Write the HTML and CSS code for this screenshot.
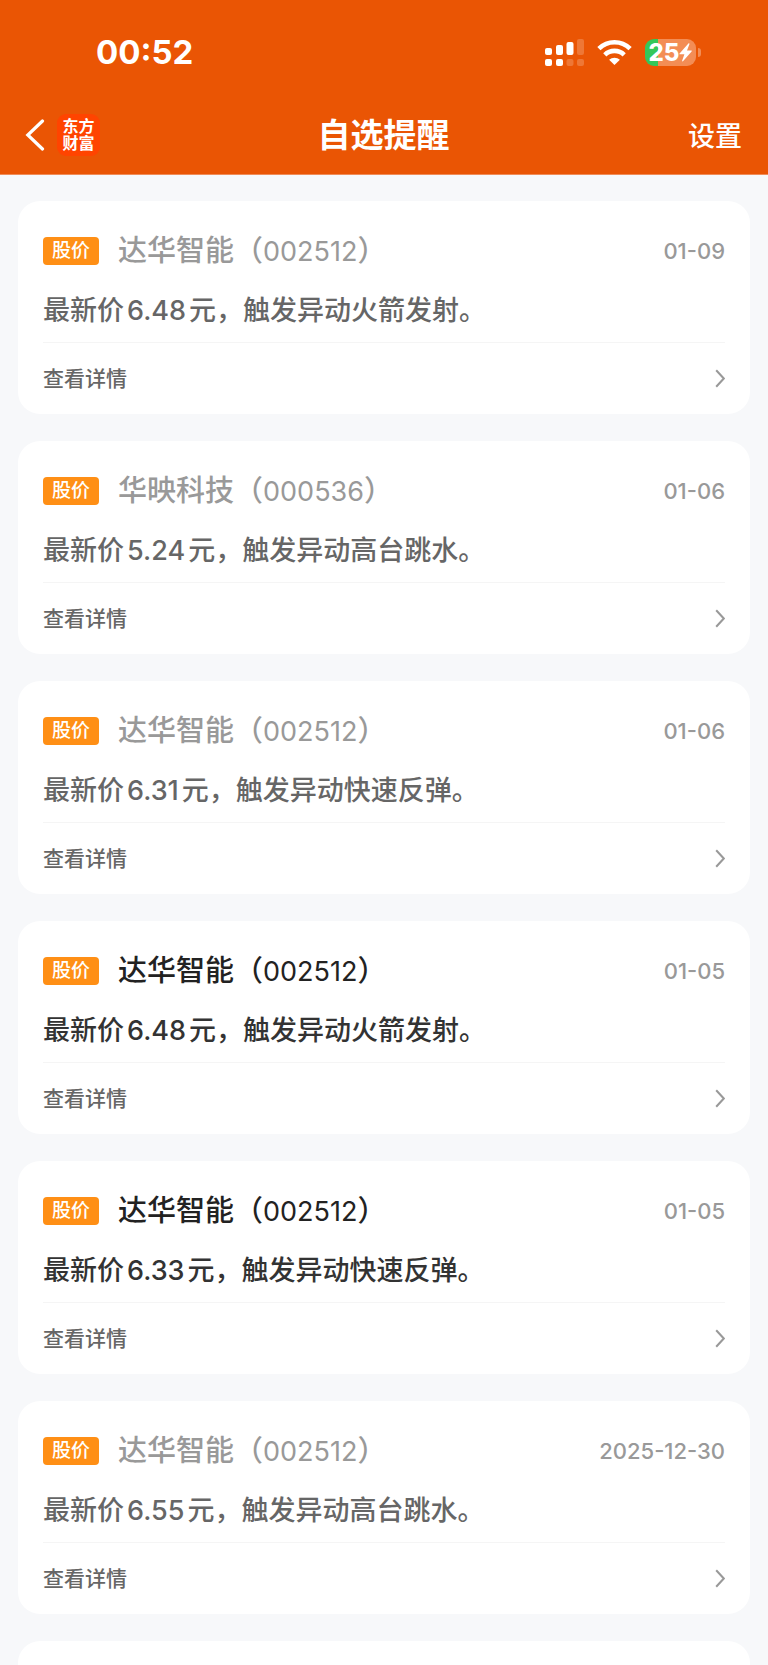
FILE: index.html
```
<!DOCTYPE html>
<html lang="zh-CN">
<head>
    <meta charset="UTF-8">
    <meta name="viewport" content="width=device-width, initial-scale=1.0">
    <title>自选提醒</title>
    <link rel="stylesheet" href="styles.css">
</head>
<body>
    <header class="header">
        <div class="status-bar">
            <span class="time">00:52</span>
            <div class="status-icons">
                <!-- Dual SIM signal -->
                <svg width="39" height="27" viewBox="0 0 39 27" fill="#fff">
                    <rect x="0" y="9" width="7" height="7" rx="2"/>
                    <rect x="11" y="6" width="7" height="10" rx="2"/>
                    <rect x="21.5" y="3" width="7" height="13" rx="2"/>
                    <rect x="32" y="0" width="7" height="16" rx="2" opacity="0.2"/>
                    <rect x="0" y="20" width="7" height="7" rx="2"/>
                    <rect x="11" y="20" width="7" height="7" rx="2"/>
                    <rect x="21.5" y="20" width="7" height="7" rx="2" opacity="0.2"/>
                    <rect x="32" y="20" width="7" height="7" rx="2" opacity="0.2"/>
                </svg>
                <!-- Wi-Fi -->
                <svg width="35" height="27" viewBox="0 0 35 27" fill="none" stroke="#fff" stroke-width="4.6">
                    <path d="M1.9 9.6C10.6 1.1 24.4 1.1 33.1 9.6"/>
                    <path d="M7.8 15.8C13.2 10.6 21.8 10.6 27.2 15.8"/>
                    <path d="M17.5 26L12.1 20.8C15.1 18 19.9 18 22.9 20.8Z" fill="#fff" stroke="none"/>
                </svg>
                <!-- Battery -->
                <div class="battery">
                    <span class="battery-level">25<svg width="13" height="19" viewBox="0 0 13 19" fill="#fff"><path d="M9.4 0.6L0.6 10.4C0.2 10.9 0.4 11.3 1 11.3H5.4L3.2 17.6C2.9 18.6 3.6 18.8 4.2 18.1L12.6 8.4C13 7.9 12.8 7.5 12.2 7.5H8L10.4 1.2C10.7 0.3 10 0 9.4 0.6Z"/></svg></span>
                    <span class="battery-tip"></span>
                </div>
            </div>
        </div>
        <nav class="nav">
            <div class="nav-left">
                <button class="back" type="button" aria-label="返回">
                    <svg width="20" height="32" viewBox="0 0 20 32" fill="none" stroke="#fff" stroke-width="3.2" stroke-linecap="round"><path d="M17.5 2L2.8 16L17.5 30"/></svg>
                </button>
                <span class="logo">东方<br>财富</span>
            </div>
            <h1 class="title">自选提醒</h1>
            <button class="settings" type="button">设置</button>
        </nav>
    </header>

    <main class="list">
        <article class="card read">
            <div class="card-head">
                <span class="tag">股价</span>
                <h2 class="name">达华智能（<span class="code">002512</span>）</h2>
                <time class="date">01-09</time>
            </div>
            <p class="message">最新价<span class="price">6.48</span>元，触发异动火箭发射。</p>
            <a class="detail" href="#">查看详情
                <svg class="arrow" width="10" height="19" viewBox="0 0 10 19"><path d="M1.2 1.2L8.8 9.5L1.2 17.8"/></svg>
            </a>
        </article>

        <article class="card read">
            <div class="card-head">
                <span class="tag">股价</span>
                <h2 class="name">华映科技（<span class="code">000536</span>）</h2>
                <time class="date">01-06</time>
            </div>
            <p class="message">最新价<span class="price">5.24</span>元，触发异动高台跳水。</p>
            <a class="detail" href="#">查看详情
                <svg class="arrow" width="10" height="19" viewBox="0 0 10 19"><path d="M1.2 1.2L8.8 9.5L1.2 17.8"/></svg>
            </a>
        </article>

        <article class="card read">
            <div class="card-head">
                <span class="tag">股价</span>
                <h2 class="name">达华智能（<span class="code">002512</span>）</h2>
                <time class="date">01-06</time>
            </div>
            <p class="message">最新价<span class="price">6.31</span>元，触发异动快速反弹。</p>
            <a class="detail" href="#">查看详情
                <svg class="arrow" width="10" height="19" viewBox="0 0 10 19"><path d="M1.2 1.2L8.8 9.5L1.2 17.8"/></svg>
            </a>
        </article>

        <article class="card">
            <div class="card-head">
                <span class="tag">股价</span>
                <h2 class="name">达华智能（<span class="code">002512</span>）</h2>
                <time class="date">01-05</time>
            </div>
            <p class="message">最新价<span class="price">6.48</span>元，触发异动火箭发射。</p>
            <a class="detail" href="#">查看详情
                <svg class="arrow" width="10" height="19" viewBox="0 0 10 19"><path d="M1.2 1.2L8.8 9.5L1.2 17.8"/></svg>
            </a>
        </article>

        <article class="card">
            <div class="card-head">
                <span class="tag">股价</span>
                <h2 class="name">达华智能（<span class="code">002512</span>）</h2>
                <time class="date">01-05</time>
            </div>
            <p class="message">最新价<span class="price">6.33</span>元，触发异动快速反弹。</p>
            <a class="detail" href="#">查看详情
                <svg class="arrow" width="10" height="19" viewBox="0 0 10 19"><path d="M1.2 1.2L8.8 9.5L1.2 17.8"/></svg>
            </a>
        </article>

        <article class="card read">
            <div class="card-head">
                <span class="tag">股价</span>
                <h2 class="name">达华智能（<span class="code">002512</span>）</h2>
                <time class="date">2025-12-30</time>
            </div>
            <p class="message">最新价<span class="price">6.55</span>元，触发异动高台跳水。</p>
            <a class="detail" href="#">查看详情
                <svg class="arrow" width="10" height="19" viewBox="0 0 10 19"><path d="M1.2 1.2L8.8 9.5L1.2 17.8"/></svg>
            </a>
        </article>

        <article class="card card-empty"></article>
    </main>
</body>
</html>
```
FILE: styles.css
```
* {
    box-sizing: border-box;
}
body {
    display: flex;
    flex-direction: column;
    height: 100vh;
    margin: 0;
    font-family: Inter, "Noto Sans CJK SC", sans-serif;
    background: #f7f8fa;
    color: #333;
}
h1, h2, p {
    margin: 0;
}
button {
    padding: 0;
    border: none;
    background: none;
    color: inherit;
    font-family: inherit;
    cursor: pointer;
}
svg {
    display: block;
}

/* Header */
.header {
    flex-shrink: 0;
    background: #ea5504;
    border-bottom: 1px solid #f08c58;
    color: #fff;
}
.status-bar {
    display: flex;
    align-items: center;
    justify-content: space-between;
    height: 104px;
    padding: 0 67px 0 96px;
}
.time {
    font-size: 33px;
    font-weight: 700;
}
.status-icons {
    display: flex;
    align-items: center;
    gap: 13px;
}
.battery {
    display: flex;
    align-items: center;
    gap: 2px;
}
.battery-level {
    display: flex;
    align-items: center;
    justify-content: center;
    width: 51px;
    height: 27px;
    border-radius: 9px;
    background: linear-gradient(to right, #34c759 25%, #f38d55 25%);
    font-size: 24px;
    font-weight: 800;
}
.battery-tip {
    width: 3px;
    height: 9px;
    border-radius: 0 4px 4px 0;
    background: #f38d55;
}
.nav {
    display: grid;
    grid-template-columns: 1fr auto 1fr;
    align-items: center;
    height: 70px;
    padding: 0 26px 8px 25px;
}
.nav-left {
    display: flex;
    align-items: center;
    gap: 12px;
}
.logo {
    width: 43px;
    height: 42px;
    padding-top: 4px;
    border-radius: 9px;
    background: #ff4400;
    font-size: 16px;
    font-weight: 700;
    line-height: 17px;
    text-align: center;
}
.title {
    font-size: 33px;
    font-weight: 700;
    line-height: 40px;
}
.settings {
    justify-self: end;
    padding-top: 3px;
    font-size: 27px;
    font-weight: 500;
    line-height: 40px;
}

/* List */
.list {
    display: flex;
    flex: 1;
    flex-direction: column;
    gap: 27px;
    min-height: 0;
    padding: 26px 18px;
    overflow-y: auto;
    scrollbar-width: none;
}
.card {
    flex-shrink: 0;
    padding: 30px 25px 0;
    border-radius: 22px;
    background: #fff;
}
.card-empty {
    height: 213px;
}
.card-head {
    display: flex;
    align-items: center;
    height: 40px;
}
.tag {
    padding: 0 9px;
    border-radius: 4px;
    background: #ff8f15;
    color: #fff;
    font-size: 19px;
    font-weight: 500;
    line-height: 28px;
}
.name {
    flex: 1;
    margin-left: 19px;
    color: #222;
    font-size: 29px;
    font-weight: 500;
    line-height: 40px;
}
.code {
    font-size: 27px;
    font-weight: 400;
}
.date {
    color: #999;
    font-size: 22px;
    font-weight: 500;
}
.message {
    padding: 20px 0 11px;
    border-bottom: 1px solid #f5f5f5;
    font-size: 27px;
    font-weight: 500;
    line-height: 40px;
}
.price {
    margin: 0 3px;
}
.detail {
    display: flex;
    align-items: center;
    justify-content: space-between;
    height: 71px;
    color: #666;
    font-size: 21px;
    font-weight: 500;
    line-height: 30px;
    text-decoration: none;
}
.arrow {
    fill: none;
    stroke: #999;
    stroke-width: 2;
}
.read .name {
    color: #999;
}
.read .message {
    color: #666;
}
```
